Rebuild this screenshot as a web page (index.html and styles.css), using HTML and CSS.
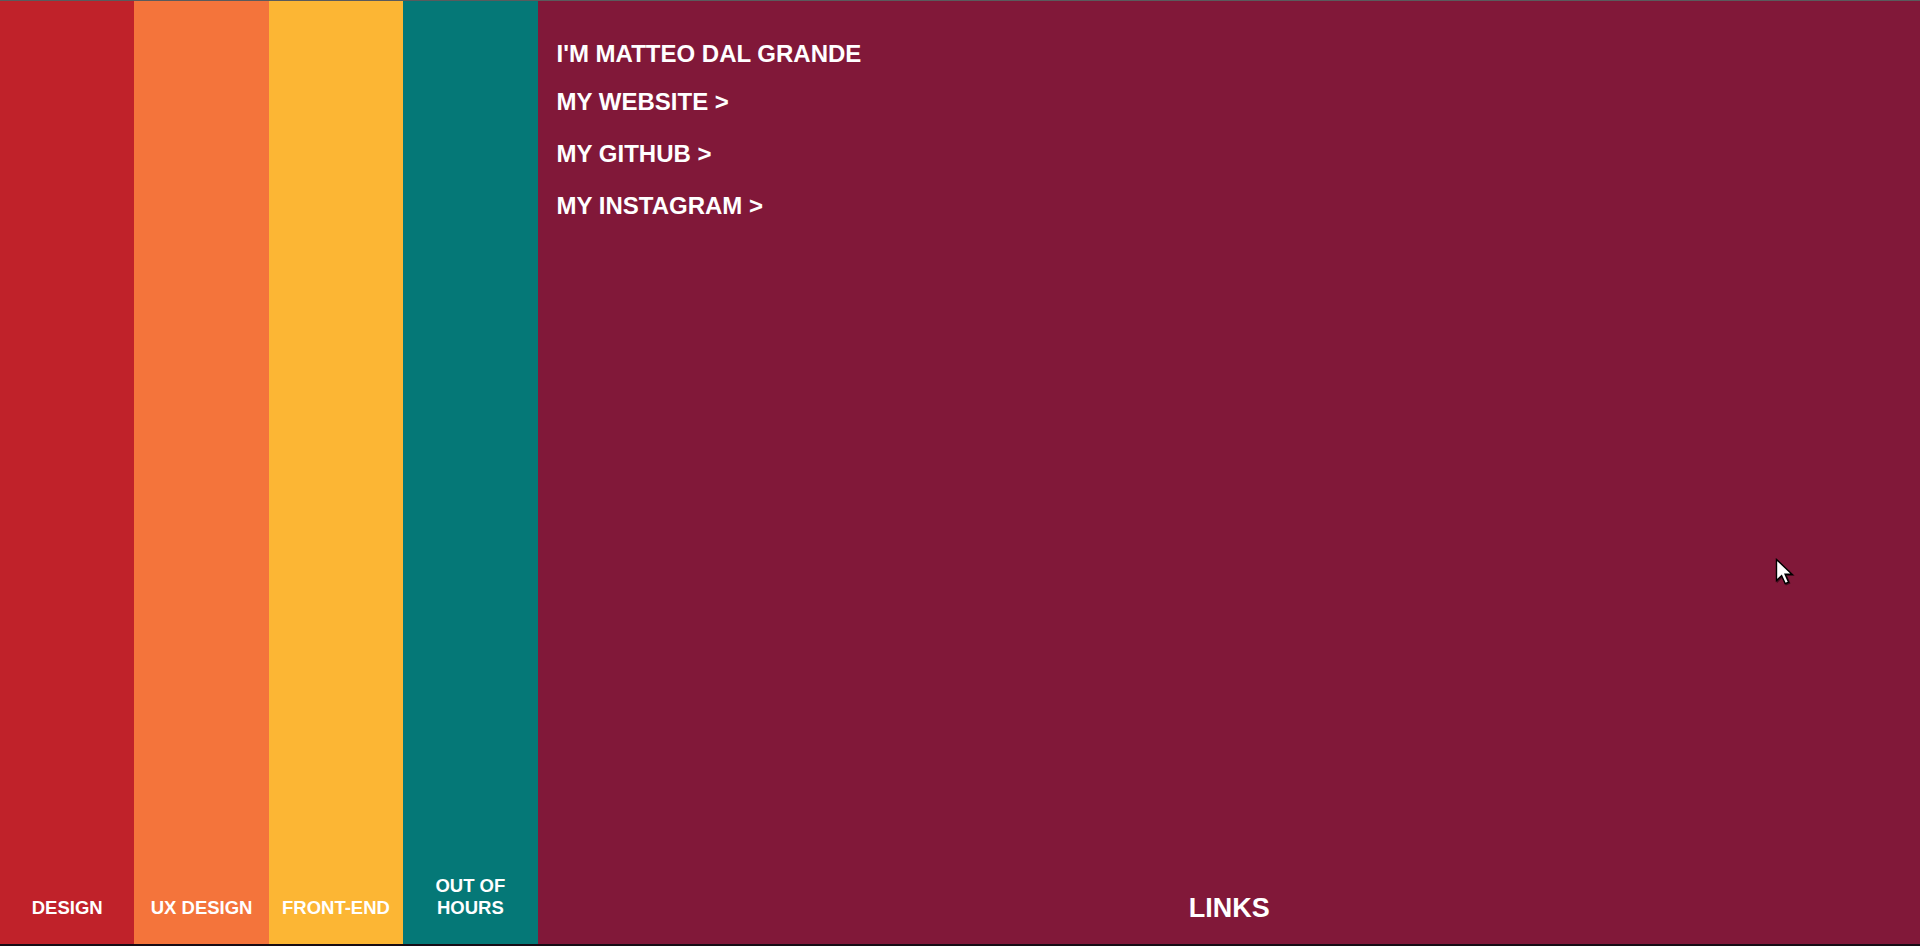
FILE: index.html
```html
<!DOCTYPE html>
<html lang="en">
<head>
<meta charset="utf-8">
<title>Matteo Dal Grande</title>
<link rel="stylesheet" href="styles.css">
</head>
<body>
<div class="page">
  <section class="col col-red"><span class="label">DESIGN</span></section>
  <section class="col col-orange"><span class="label">UX DESIGN</span></section>
  <section class="col col-yellow"><span class="label">FRONT-END</span></section>
  <section class="col col-teal"><span class="label">OUT OF HOURS</span></section>
  <section class="main">
    <div class="content">
      <h1 class="title">I'M MATTEO DAL GRANDE</h1>
      <ul class="links">
        <li><a href="#">MY WEBSITE &gt;</a></li>
        <li><a href="#">MY GITHUB &gt;</a></li>
        <li><a href="#">MY INSTAGRAM &gt;</a></li>
      </ul>
    </div>
    <span class="main-label">LINKS</span>
  </section>
</div>
<svg class="cursor" width="20" height="28" viewBox="0 0 20 28">
  <path d="M1.5 1.5 L1.5 22.5 L6.6 17.6 L10.2 25.6 L13.6 24.1 L10.1 16.3 L17 16.3 Z" fill="#ffffff" stroke="#000000" stroke-width="1.4" stroke-linejoin="miter"/>
</svg>
</body>
</html>
```
FILE: styles.css
```css
html, body {
  margin: 0;
  padding: 0;
  height: 100%;
}
body {
  background: #170c15;
  font-family: "Liberation Sans", Arial, sans-serif;
  color: #ffffff;
  overflow: hidden;
}
.page {
  display: flex;
  border-top: 1px solid #5a5b5d;
  box-sizing: border-box;
  height: 944px;
}
.col {
  flex: 0 0 7%;
  display: flex;
  flex-direction: column;
  justify-content: flex-end;
  align-items: center;
  padding: 0 4px 25px;
  box-sizing: border-box;
}
.col-red { background: #c0222a; }
.col-orange { background: #f4743b; }
.col-yellow { background: #fcb634; }
.col-teal { background: #057877; }
.label {
  font-size: 18.5px;
  line-height: 22px;
  font-weight: 700;
  text-align: center;
}
.main {
  flex: 1 1 auto;
  background: #811839;
  display: flex;
  flex-direction: column;
  justify-content: space-between;
  padding: 39px 18px 20px 19px;
  box-sizing: border-box;
}
.title {
  margin: 0;
  font-size: 24px;
  line-height: 28px;
  font-weight: 700;
}
.links {
  list-style: none;
  margin: 20px 0 0;
  padding: 0;
  display: flex;
  flex-direction: column;
  gap: 24px;
}
.links a {
  color: #ffffff;
  text-decoration: none;
  font-size: 24px;
  line-height: 28px;
  font-weight: 700;
  display: block;
}
.main-label {
  align-self: center;
  font-size: 27px;
  line-height: 32px;
  font-weight: 700;
}
.cursor {
  position: absolute;
  left: 1775px;
  top: 558px;
  filter: drop-shadow(1px 1px 0.6px rgba(0,0,0,0.5));
}
```
